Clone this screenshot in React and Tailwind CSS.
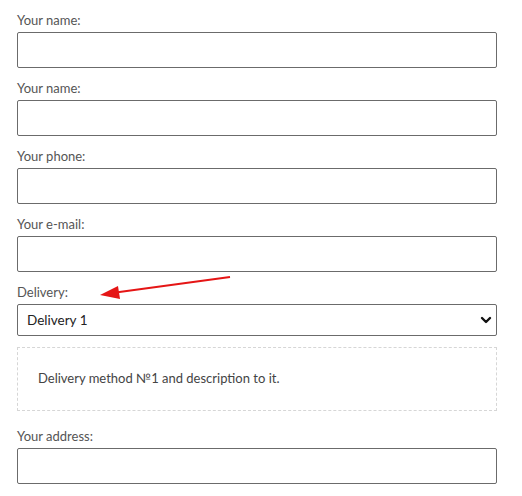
import React from 'react';

const fields = ['Your name:', 'Your name:', 'Your phone:', 'Your e-mail:'];

function Field({ label }) {
  return (
    <div className="mb-[10px]">
      <label className="block h-5 mb-[2px] text-[13px] leading-5 text-[#555]">{label}</label>
      <input type="text" className="block w-full h-9 rounded-[2px] border border-[#6b6b6b] bg-white outline-none" />
    </div>
  );
}

export default function App() {
  return (
    <div className="relative w-[522px] h-[496px] bg-white pt-[10px] pl-[17px]" style={{ fontFamily: 'Lato, "Noto Sans", sans-serif' }}>
      <div className="w-[480px]">
        {fields.map((f, i) => (
          <Field key={i} label={f} />
        ))}

        <label className="block h-5 mb-[2px] text-[13px] leading-5 text-[#555]">Delivery:</label>
        <div className="relative h-8 rounded-[2px] border border-[#6b6b6b] bg-white flex items-center pl-[9px]">
          <span className="text-[13.5px] text-[#222]">Delivery 1</span>
          <svg className="absolute right-[4px] top-[11px]" width="12" height="9" viewBox="0 0 12 9">
            <path d="M2 2 L6 6 L10 2" fill="none" stroke="#111" strokeWidth="2.4" strokeLinecap="round" strokeLinejoin="round" />
          </svg>
        </div>

        <div className="mt-[11px] h-16 border border-dashed border-[#d6d6d6] flex items-center pl-[20px]">
          <p className="text-[13px] text-[#444]">Delivery method №1 and description to it.</p>
        </div>

        <div className="mt-[15px]">
          <Field label="Your address:" />
        </div>
      </div>

      <svg className="absolute left-0 top-0 pointer-events-none" width="522" height="496">
        <line x1="230" y1="277" x2="112" y2="293" stroke="#e51515" strokeWidth="2" />
        <polygon points="100,295 118,286 120,299" fill="#e51515" />
      </svg>
    </div>
  );
}
